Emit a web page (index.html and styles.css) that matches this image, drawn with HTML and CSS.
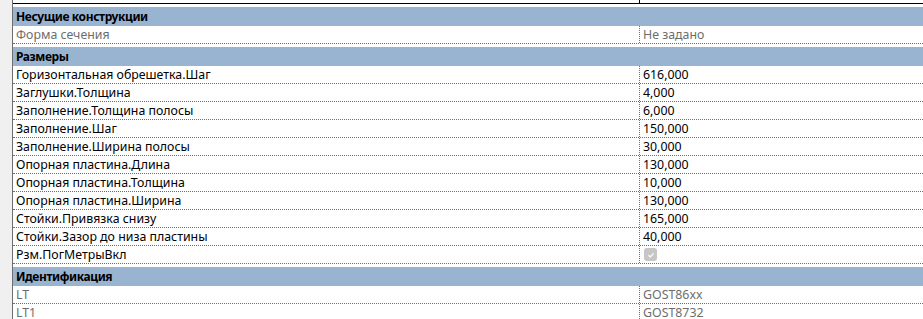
FILE: index.html
```html
<!DOCTYPE html>
<html lang="ru">
<head>
<meta charset="utf-8">
<link rel="stylesheet" href="styles.css">
</head>
<body>
<div class="frame">
  <div class="gutter"></div>
  <div class="grid">
    <div class="toprow"><div class="tl"></div><div class="tr"></div></div>

    <div class="group">Несущие конструкции</div>
    <div class="row ro"><div class="name">Форма сечения</div><div class="val">Не задано</div></div>

    <div class="group">Размеры</div>
    <div class="row"><div class="name">Горизонтальная обрешетка.Шаг</div><div class="val">616,000</div></div>
    <div class="row"><div class="name">Заглушки.Толщина</div><div class="val">4,000</div></div>
    <div class="row"><div class="name">Заполнение.Толщина полосы</div><div class="val">6,000</div></div>
    <div class="row"><div class="name">Заполнение.Шаг</div><div class="val">150,000</div></div>
    <div class="row"><div class="name">Заполнение.Ширина полосы</div><div class="val">30,000</div></div>
    <div class="row"><div class="name">Опорная пластина.Длина</div><div class="val">130,000</div></div>
    <div class="row"><div class="name">Опорная пластина.Толщина</div><div class="val">10,000</div></div>
    <div class="row"><div class="name">Опорная пластина.Ширина</div><div class="val">130,000</div></div>
    <div class="row"><div class="name">Стойки.Привязка снизу</div><div class="val">165,000</div></div>
    <div class="row"><div class="name">Стойки.Зазор до низа пластины</div><div class="val">40,000</div></div>
    <div class="row"><div class="name">Рзм.ПогМетрыВкл</div><div class="val"><span class="check"><svg width="12" height="12" viewBox="0 0 12 12"><path d="M3.5 6.2 L5.3 7.9 L8.6 4.4" fill="none" stroke="#ffffff" stroke-width="1.2"/></svg></span></div></div>

    <div class="group">Идентификация</div>
    <div class="row ro"><div class="name">LT</div><div class="val">GOST86xx</div></div>
    <div class="row ro"><div class="name">LT1</div><div class="val">GOST8732</div></div>
  </div>
</div>
</body>
</html>
```

FILE: styles.css
```css
html, body {
  margin: 0;
  padding: 0;
  background: #ffffff;
}
body {
  font-family: "Segoe UI", "Noto Sans", "Open Sans", sans-serif;
  font-size: 12.35px;
  color: #000000;
  width: 923px;
  height: 319px;
  overflow: hidden;
}
.frame {
  display: flex;
  height: 319px;
}
.gutter {
  width: 12px;
  flex: none;
  background: #f0f0f0;
  border-right: 1px solid #6e6e6e;
}
.grid {
  flex: 1;
  min-width: 0;
}
.toprow {
  display: flex;
  height: 3px;
  border-bottom: 1px solid #000000;
}
.tl {
  width: 626px;
  border-right: 1px solid #000000;
}
.tr {
  flex: 1;
}
.group {
  margin-top: 3px;
  height: 19px;
  line-height: 19px;
  background: #99b4d1;
  font-weight: bold;
  font-size: 12px;
  letter-spacing: -0.4px;
  padding-left: 3px;
  white-space: nowrap;
}
.row {
  display: flex;
  height: 17px;
  line-height: 17px;
  border-bottom: 1px dotted #6d6d6d;
  white-space: nowrap;
}
.name {
  width: 623px;
  padding-left: 3px;
  border-right: 1px dotted #6d6d6d;
  overflow: hidden;
}
.val {
  flex: 1;
  padding-left: 3px;
  display: flex;
  align-items: center;
}
.ro .name, .ro .val {
  color: #6d6d6d;
}
.check {
  width: 13px;
  height: 13px;
  margin-left: 1px;
  border-radius: 3px;
  background: #c6c6c6;
  display: flex;
  align-items: center;
  justify-content: center;
}
```
